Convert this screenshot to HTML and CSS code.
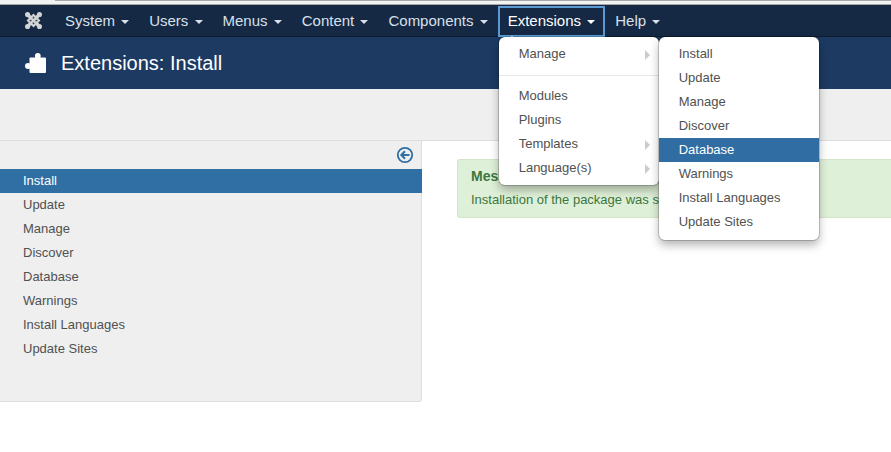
FILE: index.html
```html
<!DOCTYPE html>
<html lang="en">
<head>
<meta charset="utf-8">
<title>Extensions: Install</title>
<link rel="stylesheet" href="styles.css">
</head>
<body>
<div class="topstrip"><div class="scrollline"></div></div>
<nav class="navbar">
  <a class="brand" href="#"><svg class="logo" viewBox="0 0 20 20" width="17" height="17"><g fill="none" stroke="#d4d4d4"><path d="M3.500 3.500L16.500 16.500M16.500 3.500L3.500 16.500" stroke-width="4"/><path d="M10 3.500L16.500 10 10 16.500 3.500 10z" stroke-width="2.400"/></g><g fill="#d4d4d4"><circle cx="3" cy="3" r="3"/><circle cx="17" cy="3" r="3"/><circle cx="3" cy="17" r="3"/><circle cx="17" cy="17" r="3"/></g><g fill="#3d4a63"><circle cx="10" cy="6.800" r="1"/><circle cx="10" cy="13.200" r="1"/><circle cx="6.800" cy="10" r="1"/><circle cx="13.200" cy="10" r="1"/></g></svg></a>
  <ul class="nav">
    <li><a href="#">System <span class="caret"></span></a></li>
    <li><a href="#">Users <span class="caret"></span></a></li>
    <li><a href="#">Menus <span class="caret"></span></a></li>
    <li><a href="#">Content <span class="caret"></span></a></li>
    <li><a href="#">Components <span class="caret"></span></a></li>
    <li class="open"><a href="#">Extensions <span class="caret"></span></a>
      <ul class="menu menu-main">
        <li class="sub"><a href="#">Manage</a></li>
        <li class="divider"></li>
        <li><a href="#">Modules</a></li>
        <li><a href="#">Plugins</a></li>
        <li class="sub"><a href="#">Templates</a></li>
        <li class="sub"><a href="#">Language(s)</a></li>
      </ul>
      <ul class="menu menu-sub">
        <li><a href="#">Install</a></li>
        <li><a href="#">Update</a></li>
        <li><a href="#">Manage</a></li>
        <li><a href="#">Discover</a></li>
        <li class="active"><a href="#">Database</a></li>
        <li><a href="#">Warnings</a></li>
        <li><a href="#">Install Languages</a></li>
        <li><a href="#">Update Sites</a></li>
      </ul>
    </li>
    <li><a href="#">Help <span class="caret"></span></a></li>
  </ul>
</nav>
<header class="title">
  <svg class="puzzle" viewBox="0 0 22 20" width="22" height="20"><g fill="#fff"><rect x="4.500" y="4.500" width="16.500" height="15.500" rx="1"/><circle cx="12.800" cy="2.900" r="2.900"/><circle cx="3" cy="13" r="3"/></g></svg>
  <h1>Extensions: Install</h1>
</header>
<div class="toolbar"></div>
<main class="layout">
  <aside class="sidebar">
    <div class="toggle"><svg viewBox="0 0 18 18" width="18" height="18"><circle cx="9" cy="9" r="7.200" fill="none" stroke="#2f6fa3" stroke-width="1.800"/><path d="M13.500 9H6M9 5.300L5.300 9 9 12.700" fill="none" stroke="#2f6fa3" stroke-width="2"/></svg></div>
    <ul class="side">
      <li class="active"><a href="#">Install</a></li>
      <li><a href="#">Update</a></li>
      <li><a href="#">Manage</a></li>
      <li><a href="#">Discover</a></li>
      <li><a href="#">Database</a></li>
      <li><a href="#">Warnings</a></li>
      <li><a href="#">Install Languages</a></li>
      <li><a href="#">Update Sites</a></li>
    </ul>
  </aside>
  <section class="content">
    <div class="alert">
      <h4>Message</h4>
      <p>Installation of the package was successful.</p>
    </div>
  </section>
</main>
</body>
</html>
```
FILE: styles.css
```css
* { box-sizing: border-box; }
html, body { margin: 0; padding: 0; }
body {
  font-family: "Liberation Sans", Arial, sans-serif;
  font-size: 13px;
  line-height: 18px;
  color: #515151;
  background: #fff;
  overflow: hidden;
  height: 452px;
}
a { text-decoration: none; color: inherit; }
ul { list-style: none; margin: 0; padding: 0; }

.topstrip { height: 5px; background: #f2f2f2; border-bottom: 1px solid #a8a8a8; padding-left: 55px; }
.scrollline { height: 1px; background: #a8a8a8; }

.navbar {
  height: 32px;
  background: #152844;
  border-bottom: 1px solid #0f1c30;
  display: flex;
  align-items: stretch;
  font-size: 15px;
}
.brand { width: 55px; display: flex; align-items: center; padding: 0 0 0 25px; }
.nav { display: flex; }
.nav > li { position: relative; }
.nav > li > a {
  display: block;
  height: 32px;
  line-height: 31px;
  padding: 0 10px;
  color: #d8e0ea;
}
.caret {
  display: inline-block;
  width: 0; height: 0;
  margin-left: 2px;
  vertical-align: middle;
  border-top: 4px solid currentColor;
  border-left: 4px solid transparent;
  border-right: 4px solid transparent;
}
.nav > li.open > a {
  color: #fff;
  border: 2px solid #5b9bd1;
  line-height: 25px;
  padding: 0 8px;
  height: 31px;
  margin-top: 1px;
}
.open::after {
  content: "";
  position: absolute;
  left: 8px;
  top: 31px;
  border-left: 6px solid transparent;
  border-right: 6px solid transparent;
  border-bottom: 6px solid #fff;
  z-index: 6;
}
.menu {
  position: absolute;
  background: #fff;
  border-radius: 6px;
  box-shadow: 0 0 0 1px rgba(0,0,0,.18), 0 5px 10px rgba(0,0,0,.3);
  padding: 5px 0;
  z-index: 5;
  font-size: 13px;
  line-height: 24px;
  color: #515151;
}
.menu a { display: block; padding: 0 20px; height: 24px; }
.menu-main { left: 1px; top: 32px; width: 160px; }
.menu-sub { left: 161px; top: 32px; width: 160px; padding: 5px 0 6px; }
.menu .divider { height: 1px; background: #e8e8e8; margin: 9px 0 8px; }
.menu .sub { position: relative; }
.menu .sub::after {
  content: "";
  position: absolute;
  right: 9px;
  top: 8px;
  border-left: 5px solid #ccc;
  border-top: 5px solid transparent;
  border-bottom: 5px solid transparent;
}
.menu .active a { background: #2f6da3; color: #fff; }

.title {
  height: 52px;
  background: #1c3a62;
  display: flex;
  align-items: center;
  padding-left: 25px;
  gap: 14px;
}
.title h1 { margin: 0; font-size: 20px; font-weight: 400; color: #fff; line-height: 26px; }

.toolbar { height: 52px; background: #efefef; border-bottom: 1px solid #dedede; }

.layout { display: flex; align-items: flex-start; }
.sidebar {
  width: 422px;
  height: 261px;
  background: #efefef;
  border-right: 1px solid #dedede;
  border-bottom: 1px solid #dedede;
  border-bottom-right-radius: 3px;
}
.toggle { height: 28px; display: flex; justify-content: flex-end; align-items: center; padding-right: 7px; }
.side { margin-right: -1px; }
.side a { display: block; height: 24px; line-height: 24px; padding-left: 23px; color: #515151; }
.side .active a { background: #2f6fa3; color: #fff; }

.content { flex: 1; padding: 18px 0 0 35px; }
.alert {
  height: 59px;
  background: #dff0d8;
  border: 1px solid #d3e6c9;
  border-right: 0;
  border-radius: 3px 0 0 3px;
  padding: 6px 13px;
  color: #3c763d;
}
.alert h4 { margin: 0 0 4px; font-size: 14px; line-height: 20px; font-weight: 700; }
.alert p { margin: 0; line-height: 20px; }
```
